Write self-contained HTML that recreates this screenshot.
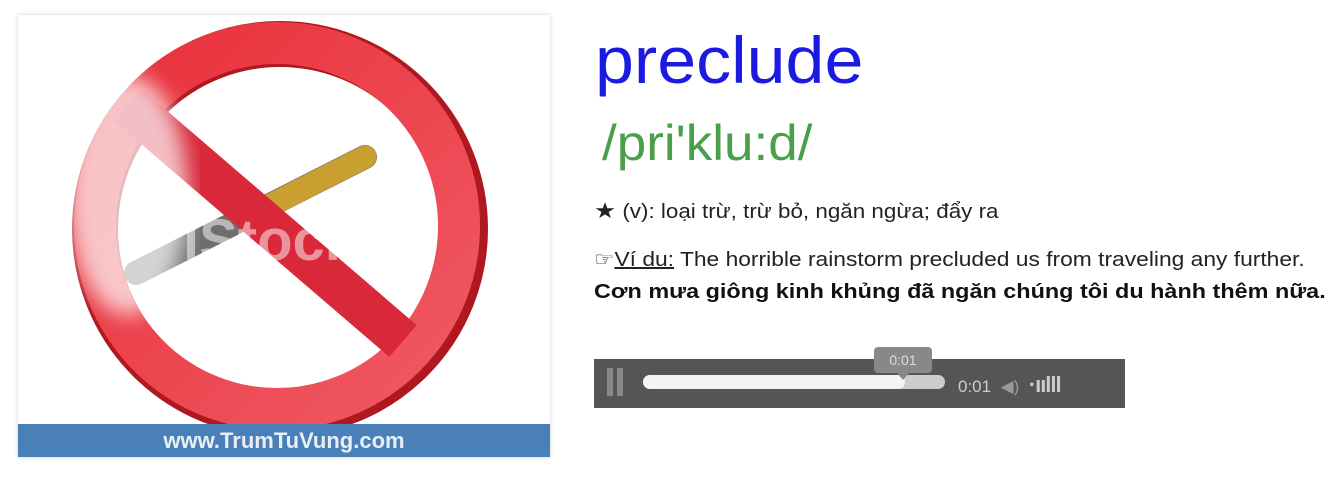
<!DOCTYPE html>
<html><head><meta charset="utf-8"><style>
body{margin:0;width:1332px;height:500px;background:#fff;position:relative;overflow:hidden;font-family:"Liberation Sans",Arial,sans-serif}
.box{position:absolute;left:18px;top:15px;width:532px;height:442px;background:#fff;box-shadow:0 0 4px #ccc;overflow:hidden}
.bar{position:absolute;left:0;bottom:0;width:100%;height:33px;background:#4a80b8;color:#e8eef6;font-weight:bold;font-size:22px;text-align:center;line-height:33px}
.t{position:absolute;white-space:nowrap;transform-origin:0 0}
</style></head><body>
<div class="box">
<svg width="532" height="442" style="position:absolute;left:0;top:0">
<defs><linearGradient id="g" x1="0" y1="0" x2="1" y2="1"><stop offset="0" stop-color="#e8303a"/><stop offset="1" stop-color="#f05a64"/></linearGradient>
<filter id="b"><feGaussianBlur stdDeviation="10"/></filter></defs>
<ellipse cx="262" cy="214" rx="185" ry="185" fill="none" stroke="#b01820" stroke-width="46"/>
<ellipse cx="259" cy="211" rx="182" ry="183" fill="none" stroke="url(#g)" stroke-width="42"/>
<line x1="118" y1="258" x2="347" y2="142" stroke="#6e6e6e" stroke-width="24" stroke-linecap="round"/>
<line x1="249" y1="192" x2="347" y2="142" stroke="#c9a030" stroke-width="23" stroke-linecap="round"/>
<line x1="110" y1="90" x2="385" y2="326" stroke="#d8283a" stroke-width="42"/>
<text x="165" y="245" font-size="58" font-weight="bold" fill="#fff" opacity=".5" font-family="Liberation Sans">iStock</text>
<ellipse cx="110" cy="180" rx="60" ry="120" fill="#fff" opacity=".7" filter="url(#b)"/>
</svg>
<div class="bar">www.TrumTuVung.com</div>
</div>
<div class="t" style="left:595px;top:22px;font-size:66px;color:#1a1ae0;transform:scaleX(1.06)">preclude</div>
<div class="t" style="left:602px;top:114px;font-size:50px;color:#4aa04a;transform:scaleX(1.06)">/pri'klu:d/</div>
<div class="t" style="left:594px;top:198px;font-size:20px;color:#222;transform:scaleX(1.12)"><span style="font-size:22px">★</span> (v): loại trừ, trừ bỏ, ngăn ngừa; đẩy ra</div>
<div class="t" style="left:594px;top:247px;font-size:20px;color:#222;transform:scaleX(1.14)">☞<u>Ví du:</u> The horrible rainstorm precluded us from traveling any further.</div>
<div class="t" style="left:594px;top:281px;font-size:20px;font-weight:bold;color:#111;transform:scaleX(1.17)">Cơn mưa giông kinh khủng đã ngăn chúng tôi du hành thêm nữa.</div>
<div style="position:absolute;left:594px;top:359px;width:531px;height:49px;background:#555"></div>
<div style="position:absolute;left:607px;top:368px;width:6px;height:28px;background:#888"></div>
<div style="position:absolute;left:617px;top:368px;width:6px;height:28px;background:#888"></div>
<div style="position:absolute;left:643px;top:375px;width:302px;height:14px;border-radius:7px;background:#ccc"></div>
<div style="position:absolute;left:643px;top:375px;width:262px;height:14px;border-radius:7px;background:#f4f4f4"></div>
<div style="position:absolute;left:874px;top:347px;width:58px;height:26px;border-radius:4px;background:#888;color:#ddd;font-size:14px;text-align:center;line-height:26px">0:01</div>
<div style="position:absolute;left:897px;top:373px;width:0;height:0;border-left:6px solid transparent;border-right:6px solid transparent;border-top:7px solid #888"></div>
<div class="t" style="left:958px;top:372px;font-size:17px;color:#ccc">0:01 &nbsp;<span style="color:#999">◀)</span> &nbsp;<b style="font-size:22px;letter-spacing:-1px">·ıılll</b></div>
</body></html>
